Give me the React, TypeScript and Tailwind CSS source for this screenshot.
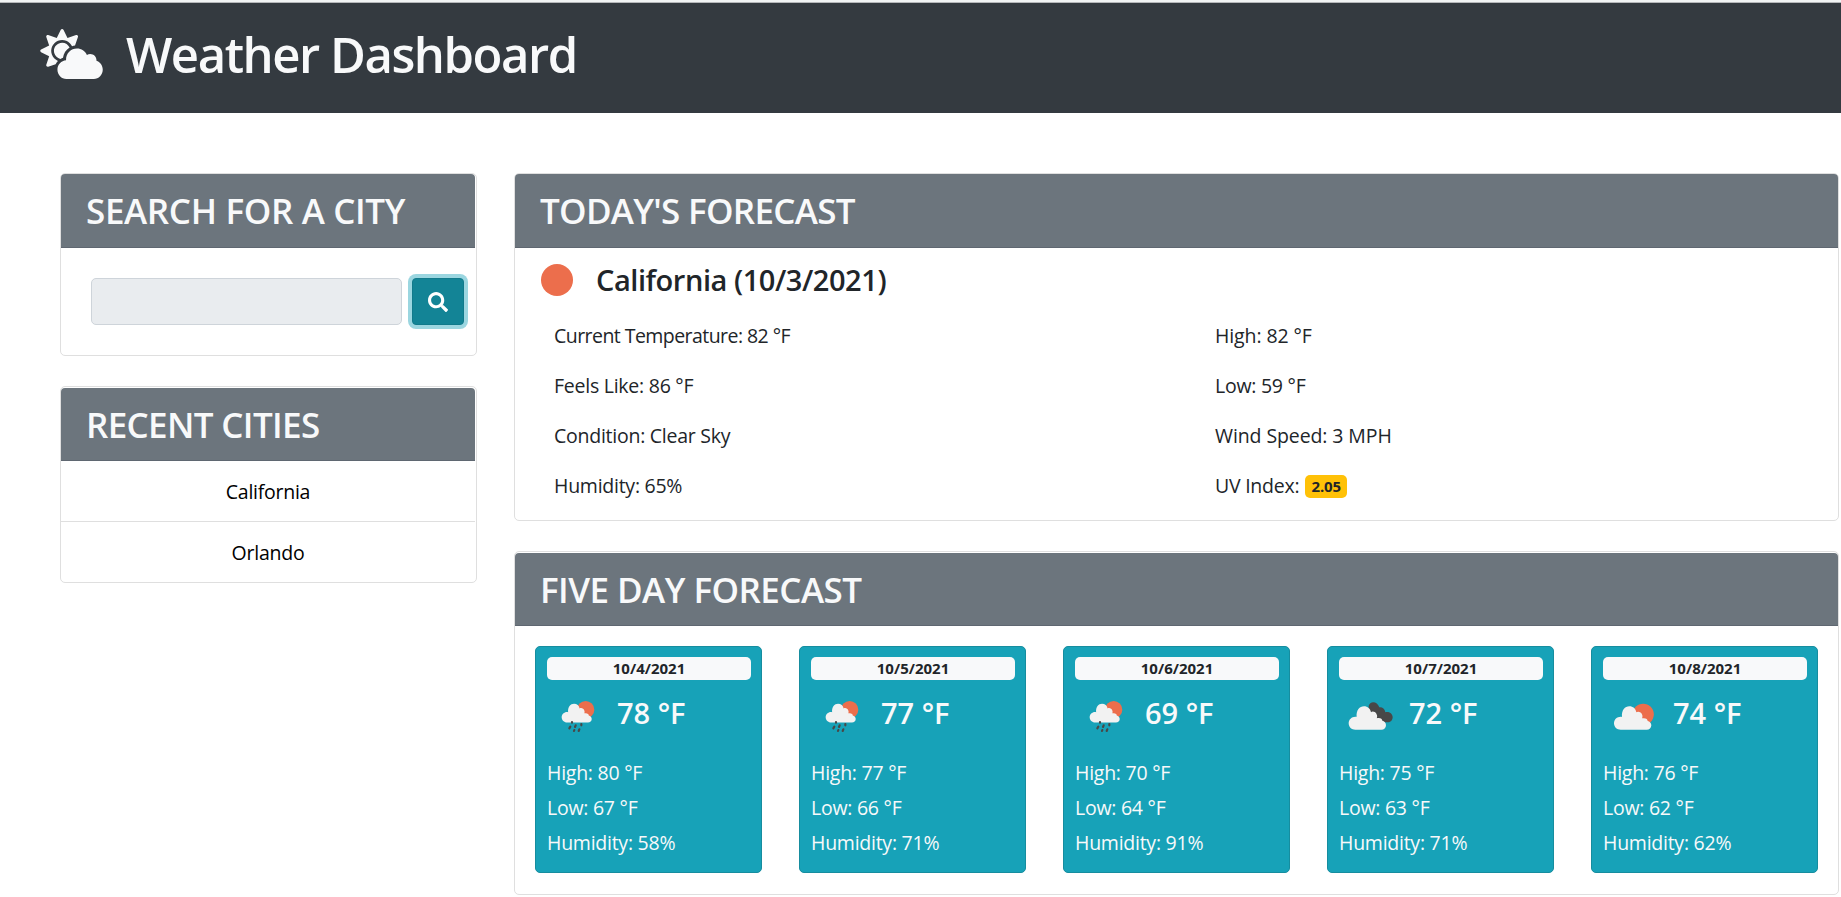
import React from "react";
import { FaCloudSun, FaSearch } from "react-icons/fa";

type IconKind = "rain" | "broken" | "few";

interface Day {
  date: string;
  icon: IconKind;
  temp: number;
  high: number;
  low: number;
  humidity: number;
}

const days: Day[] = [
  { date: "10/4/2021", icon: "rain", temp: 78, high: 80, low: 67, humidity: 58 },
  { date: "10/5/2021", icon: "rain", temp: 77, high: 77, low: 66, humidity: 71 },
  { date: "10/6/2021", icon: "rain", temp: 69, high: 70, low: 64, humidity: 91 },
  { date: "10/7/2021", icon: "broken", temp: 72, high: 75, low: 63, humidity: 71 },
  { date: "10/8/2021", icon: "few", temp: 74, high: 76, low: 62, humidity: 62 },
];

const CLOUD =
  "M20 70.500C9 70.500 0 62 0 51C0 40 9 31.500 20 31.500C21 31.500 23 31.500 24 32C22 12 33 0 46 0C57 0 65 7 67 18C70 15 82 15 85 27C86 31 85 33 84.500 36C95 34 101 38 101 44C107 45 112 50 112 57C112 65 106 70.500 98 70.500Z";

function WeatherIcon({ kind }: { kind: IconKind }) {
  return (
    <svg className="block h-[50px] w-[70px]" viewBox="0 0 210 150" aria-hidden="true">
      {kind === "rain" && (
        <>
          <circle cx="137" cy="59" r="26" fill="#ec6e4c" />
          <path d={CLOUD} transform="translate(65 41) scale(.805)" fill="#f2f2f2" />
          <g stroke="#484848" strokeWidth="6.500" strokeLinecap="round">
            <path d="M96 96v2M91 110l-3 5M107 106l-2 5M124 102v4M103 120l-1 3M118 118l-2 5" />
          </g>
        </>
      )}
      {kind === "broken" && (
        <g transform="translate(-6 0)">
          <path
            d="M116 48C119 32 142 32 148 52C157 51 164 56 166 67C176 64 187 70 188 81C188 91 181 97 173 97L150 97L116 60Z"
            fill="#484848"
          />
          <path d={CLOUD} transform="translate(56 48.500)" fill="#f2f2f2" />
        </g>
      )}
      {kind === "few" && (
        <g transform="translate(12 0)">
          <circle cx="129.500" cy="73" r="32" fill="#ec6e4c" />
          <path d={CLOUD} transform="translate(42 49)" fill="#f2f2f2" />
        </g>
      )}
    </svg>
  );
}

function Card({
  title,
  headClass,
  className,
  children,
}: {
  title: string;
  headClass: string;
  className: string;
  children: React.ReactNode;
}) {
  return (
    <section className={`flex flex-col rounded-[5px] border border-[#dfdfdf] bg-white ${className}`}>
      <h2
        className={`shrink-0 rounded-t-[4px] border-b border-[#5f6771] bg-[#6c757d] pl-[25px] text-[35px] leading-[74px] font-semibold text-[#f8f9fa] ${headClass}`}
      >
        {title}
      </h2>
      {children}
    </section>
  );
}

function Line({ className = "", children }: { className?: string; children: React.ReactNode }) {
  return <p className={`flex h-[50px] items-center ${className}`}>{children}</p>;
}

export default function App() {
  return (
    <div className="h-[897px] w-[1841px] overflow-hidden bg-white font-['Open_Sans',sans-serif] text-[19.5px] tracking-[-0.25px] text-[#212529]">
      <div className="h-[3px] border-b border-[#b5b7ba] bg-[#f1f3f4]" />
      <header className="flex h-[110px] items-center bg-[#343a40] pb-[8px] pl-10 text-[#f8f9fa]">
        <FaCloudSun className="h-[50px] w-[63px]" />
        <h1 className="ml-[23px] text-[49px] leading-[60px] font-semibold tracking-[-1.45px]">Weather Dashboard</h1>
      </header>

      <main className="flex gap-[37px] pt-[60px] pl-[60px]">
        <aside className="flex w-[417px] shrink-0 flex-col gap-[30px]">
          <Card title="SEARCH FOR A CITY" headClass="h-[74px] tracking-[-0.35px]" className="h-[183px] pr-px">
            <div className="flex gap-[10px] pt-[30px] pl-[30px]">
              <input
                aria-label="City"
                className="h-[47px] w-[311px] rounded-[5px] border border-[#ced4da] bg-[#e9ecef]"
              />
              <button
                aria-label="Search"
                className="flex h-[47px] w-[52px] items-center justify-center rounded-[4px] border border-[#117a8b] bg-[#138496] text-white shadow-[0_0_0_4px_#9bd6e0]"
              >
                <FaSearch className="size-5" />
              </button>
            </div>
          </Card>

          <Card title="RECENT CITIES" headClass="h-[73px] tracking-[-0.65px]" className="h-[197px] pt-px pr-px">
            <div className="flex h-[61px] items-center justify-center border-b border-[#dfdfdf] pt-0.5 text-black">
              California
            </div>
            <div className="flex h-[60px] items-center justify-center pt-0.5 text-black">Orlando</div>
          </Card>
        </aside>

        <div className="flex w-[1325px] shrink-0 flex-col gap-[30px]">
          <Card title="TODAY'S FORECAST" headClass="h-[74px] tracking-[-0.7px]" className="h-[348px]">
            <div className="flex h-[63px] items-center pl-[26px]">
              <svg className="size-8" viewBox="0 0 32 32" aria-hidden="true">
                <circle cx="16" cy="16" r="16" fill="#ec6e4c" />
              </svg>
              <h3 className="ml-[23px] text-[29px] leading-[36px] font-semibold tracking-[-0.45px]">
                California (10/3/2021)
              </h3>
            </div>
            <div className="grid grid-cols-[661px_1fr] pl-[39px]">
              <div>
                <Line className="tracking-[-0.55px]">Current Temperature: 82 °F</Line>
                <Line>Feels Like: 86 °F</Line>
                <Line>Condition: Clear Sky</Line>
                <Line>Humidity: 65%</Line>
              </div>
              <div>
                <Line className="tracking-[-0.1px]">High: 82 °F</Line>
                <Line>Low: 59 °F</Line>
                <Line className="tracking-[-0.1px]">Wind Speed: 3 MPH</Line>
                <Line>
                  UV Index:
                  <span className="mt-px ml-[6px] flex h-[23px] w-[42px] items-center justify-center rounded-[5px] bg-[#ffc107] text-[15px] font-bold tracking-[-0.1px]">
                    2.05
                  </span>
                </Line>
              </div>
            </div>
          </Card>

          <Card title="FIVE DAY FORECAST" headClass="h-[73px] tracking-[-0.55px]" className="h-[344px] pt-px">
            <div className="flex gap-[37px] pt-5 pl-5">
              {days.map((d) => (
                <article
                  key={d.date}
                  className="h-[227px] w-[227px] rounded-[5px] border border-[#168d9f] bg-[#17a2b8] pt-[10px] pr-[10px] pl-[11px] text-[#f8f9fa]"
                >
                  <div className="flex h-[23px] items-center justify-center rounded-[5px] bg-[#f8f9fa] text-[15px] font-bold tracking-normal text-[#212529]">
                    {d.date}
                  </div>
                  <div className="flex h-[73px] items-start">
                    <div className="-ml-[7px] mt-[10px]">
                      <WeatherIcon kind={d.icon} />
                    </div>
                    <div className="mt-[15px] ml-[7px] text-[29px] leading-[36px] font-semibold tracking-normal">
                      {d.temp} °F
                    </div>
                  </div>
                  <p className="h-[35px] leading-[40px]">High: {d.high} °F</p>
                  <p className="h-[35px] leading-[40px]">Low: {d.low} °F</p>
                  <p className="h-[35px] leading-[40px]">Humidity: {d.humidity}%</p>
                </article>
              ))}
            </div>
          </Card>
        </div>
      </main>
    </div>
  );
}
